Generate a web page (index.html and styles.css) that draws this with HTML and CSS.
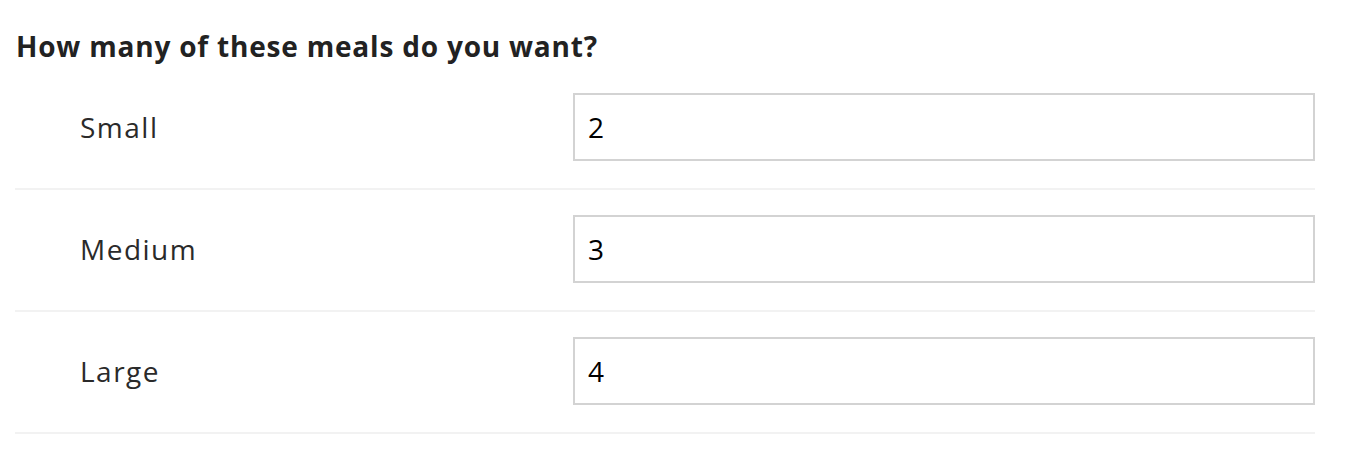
FILE: index.html
```html
<!DOCTYPE html>
<html>
<head>
<meta charset="utf-8">
<link rel="stylesheet" href="styles.css">
</head>
<body>
<form class="meal-form">
  <h2 class="title">How many of these meals do you want?</h2>
  <div class="row">
    <label class="label" for="small">Small</label>
    <input class="field" id="small" type="text" value="2">
  </div>
  <div class="row">
    <label class="label" for="medium">Medium</label>
    <input class="field" id="medium" type="text" value="3">
  </div>
  <div class="row">
    <label class="label" for="large">Large</label>
    <input class="field" id="large" type="text" value="4">
  </div>
</form>
</body>
</html>
```
FILE: styles.css
```css
html, body {
  margin: 0;
  padding: 0;
  background: #ffffff;
}
body {
  font-family: "Open Sans", "Noto Sans", sans-serif;
  color: #222222;
}
.meal-form {
  width: 1300px;
  margin-left: 15px;
  padding-top: 24px;
}
.title {
  margin: 0 0 0 1px;
  font-size: 28px;
  font-weight: 700;
  line-height: 44px;
  letter-spacing: 0.8px;
  color: #222222;
}
.row {
  display: flex;
  align-items: center;
  padding: 25px 0 27px;
  border-bottom: 2px solid #f2f2f2;
}
.label {
  width: 493px;
  padding-left: 65px;
  font-size: 28px;
  letter-spacing: 1.5px;
  color: #2a2a2a;
}
.field {
  flex: 1;
  box-sizing: border-box;
  height: 68px;
  margin: 0;
  padding: 0 13px;
  border: 2px solid #d3d3d3;
  border-radius: 0;
  outline: none;
  font-family: "Open Sans", "Noto Sans", sans-serif;
  font-size: 28px;
  color: #000000;
  background: #ffffff;
}
```
